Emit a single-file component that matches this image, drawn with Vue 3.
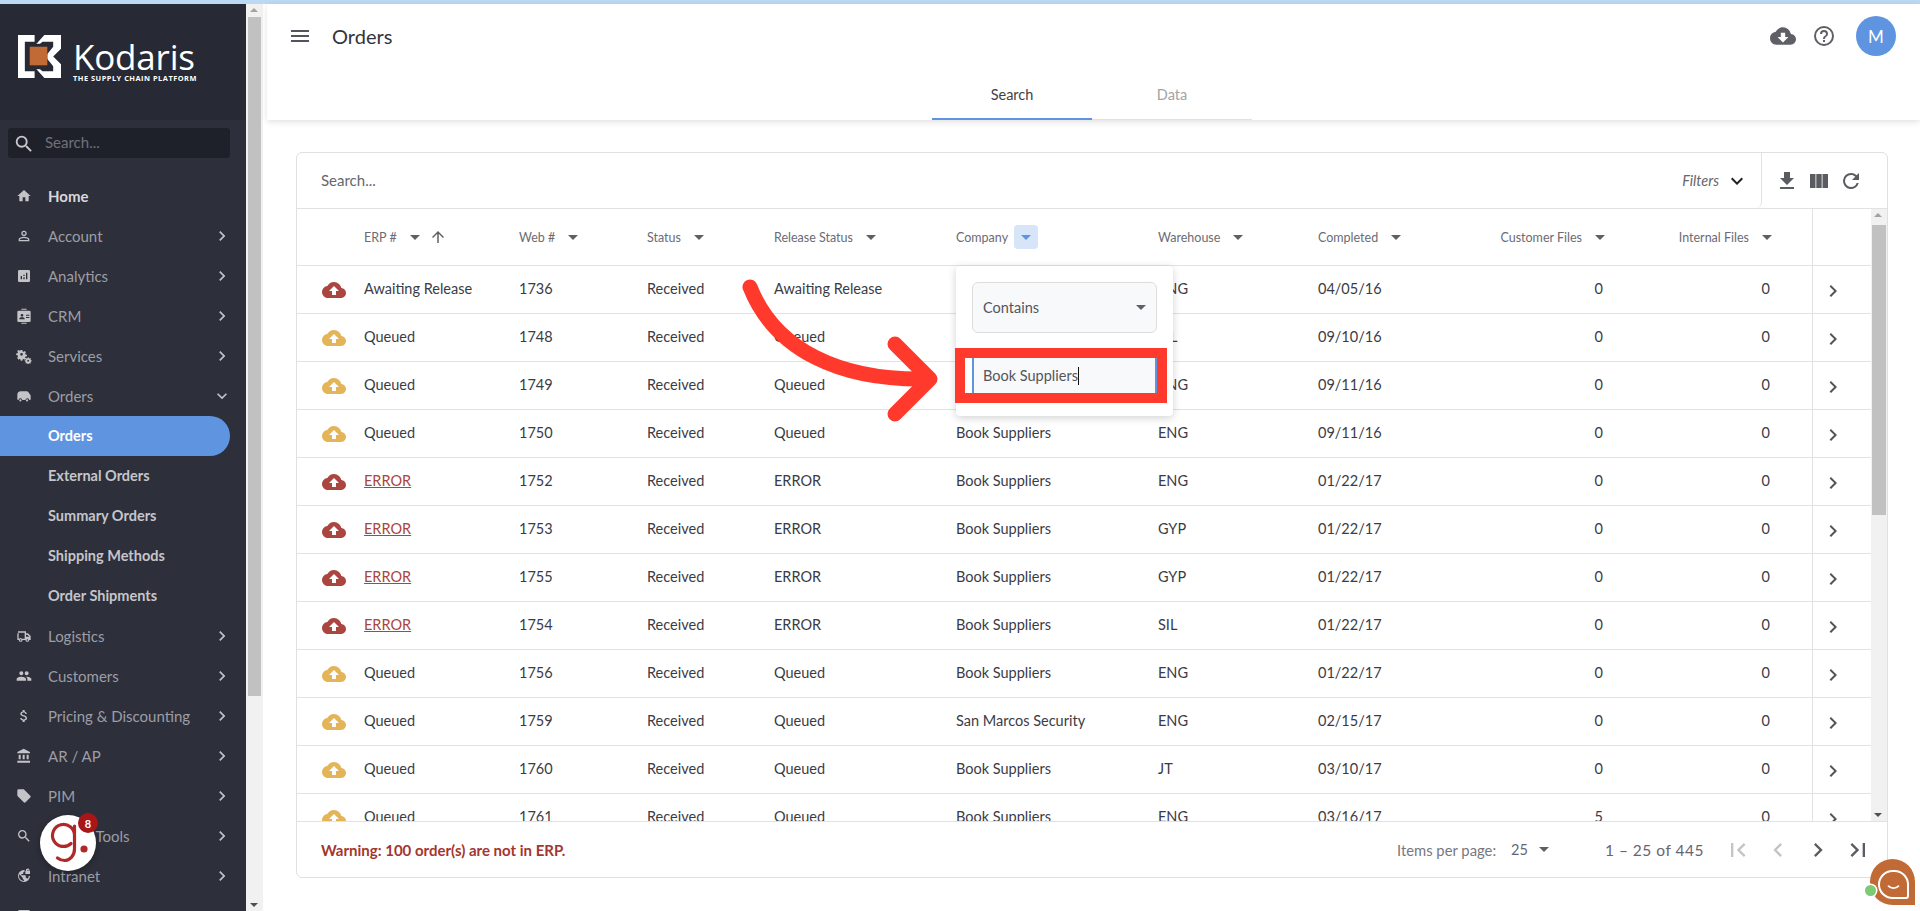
<script setup>
const nav = [
  { l: 'Home', i: 'home', bright: true, noArrow: true },
  { l: 'Account', i: 'acct' },
  { l: 'Analytics', i: 'ana' },
  { l: 'CRM', i: 'crm' },
  { l: 'Services', i: 'svc' },
  { l: 'Orders', i: 'truck', open: true },
  { l: 'Orders', sub: true, active: true },
  { l: 'External Orders', sub: true },
  { l: 'Summary Orders', sub: true },
  { l: 'Shipping Methods', sub: true },
  { l: 'Order Shipments', sub: true },
  { l: 'Logistics', i: 'ship' },
  { l: 'Customers', i: 'ppl' },
  { l: 'Pricing & Discounting', i: 'usd' },
  { l: 'AR / AP', i: 'bank' },
  { l: 'PIM', i: 'tag' },
  { l: 'Search Tools', i: 'mag' },
  { l: 'Intranet', i: 'globe' },
  { l: 'CMS', i: 'ana' }
]
const icons = {
  home: 'M10 20v-6h4v6h5v-8h3L12 3 2 12h3v8z',
  acct: 'M12 5.9a2.1 2.1 0 1 1 0 4.2 2.1 2.1 0 0 1 0-4.2m0 9c2.97 0 6.1 1.46 6.1 2.1v1.1H5.9V17c0-.64 3.13-2.1 6.1-2.1M12 4a4 4 0 1 0 0 8 4 4 0 0 0 0-8zm0 9c-2.67 0-8 1.34-8 4v3h16v-3c0-2.66-5.33-4-8-4z',
  ana: 'M19 3H5a2 2 0 0 0-2 2v14a2 2 0 0 0 2 2h14a2 2 0 0 0 2-2V5a2 2 0 0 0-2-2zM9 17H7v-5h2v5zm4 0h-2v-3h2v3zm0-5h-2v-2h2v2zm4 5h-2V7h2v10z',
  crm: 'M2 6a2 2 0 0 1 2-2h16a2 2 0 0 1 2 2v13a2 2 0 0 1-2 2H4a2 2 0 0 1-2-2zM9 9a2 2 0 1 0 0 4 2 2 0 0 0 0-4zm-4 8h8v-1c0-1.300-2.700-2-4-2s-4 .7-4 2zm10-7v1.500h5V10zm0 3.500V15h5v-1.500zM8 1h8v1.500H8zM8 22h8v1.500H8z',
  svc: 'M9.5 3l.4 2.1 1.6.7 1.8-1.2 1.6 1.6-1.2 1.8.7 1.6 2.1.4v2.3l-2.1.4-.7 1.6 1.2 1.8-1.6 1.6-1.8-1.2-1.6.7-.4 2.1H7.2l-.4-2.1-1.6-.7-1.8 1.2L1.8 14.4 3 12.6l-.7-1.6L.2 10.6V8.3l2.1-.4.7-1.6-1.2-1.8 1.6-1.6 1.8 1.2 1.6-.7L7.2 3zM8.3 7.5a2 2 0 1 0 0 4 2 2 0 0 0 0-4zM19 14l.3 1.2 1.1.5 1.1-.7 1 1-.7 1.1.5 1.1 1.2.3v1.400l-1.2.3-.5 1.100.7 1.100-1 1-1.100-.7-1.100.5-.3 1.200h-1.400l-.3-1.200-1.100-.5-1.100.7-1-1 .7-1.100-.5-1.100-1.200-.3v-1.400l1.200-.3.5-1.100-.7-1.100 1-1 1.100.7 1.100-.5.3-1.200zm-.7 3.600a1.400 1.400 0 1 0 0 2.800 1.400 1.400 0 0 0 0-2.800z',
  truck: 'M7 5h8c2 0 3.2.6 4.2 2l2.4 3.4c.3.5.4 1 .4 1.6v5a1 1 0 0 1-1 1h-1.2a2.8 2.8 0 0 0-5.6 0H9.4a2.8 2.8 0 0 0-5.6 0H3a1 1 0 0 1-1-1v-7c0-3 2-5 5-5zM6.6 17a1.6 1.6 0 1 1 0 3.2 1.6 1.6 0 0 1 0-3.2zm10 0a1.6 1.6 0 1 1 0 3.2 1.6 1.6 0 0 1 0-3.2z',
  ship: 'M3 5h12v3h3l4 4v6h-2.2a2.8 2.8 0 0 1-5.6 0H9.8a2.8 2.8 0 0 1-5.6 0H2V8h2v8h1a3 3 0 0 1 4 0h4V7H3zm12 5v3h5l-3-3zM7 16.8a1.2 1.2 0 1 0 0 2.4 1.2 1.2 0 0 0 0-2.4zm10 0a1.2 1.2 0 1 0 0 2.4 1.2 1.2 0 0 0 0-2.4z',
  ppl: 'M16 11a3 3 0 1 0 0-6 3 3 0 0 0 0 6zm-8 0a3 3 0 1 0 0-6 3 3 0 0 0 0 6zm0 2c-2.33 0-7 1.17-7 3.5V19h14v-2.5C15 14.17 10.33 13 8 13zm8 0c-.29 0-.62.02-.97.05 1.16.84 1.97 1.97 1.97 3.45V19h6v-2.5c0-2.33-4.67-3.5-7-3.5z',
  usd: 'M11.8 10.9c-2.27-.59-3-1.2-3-2.15 0-1.09 1.01-1.85 2.7-1.85 1.78 0 2.44.85 2.5 2.1h2.21c-.07-1.72-1.12-3.3-3.21-3.81V3h-3v2.16c-1.94.42-3.5 1.68-3.5 3.61 0 2.31 1.91 3.46 4.7 4.13 2.5.6 3 1.48 3 2.41 0 .69-.49 1.79-2.7 1.79-2.06 0-2.87-.92-2.98-2.1h-2.2c.12 2.19 1.76 3.42 3.68 3.83V21h3v-2.15c1.95-.37 3.5-1.5 3.5-3.55 0-2.84-2.43-3.81-4.7-4.4z',
  bank: 'M4 10v7h3v-7H4zm6 0v7h3v-7h-3zM2 22h19v-3H2v3zm14-12v7h3v-7h-3zM11.500 1L2 6v2h19V6l-9.500-5z',
  tag: 'M21.41 11.58l-9-9C12.05 2.22 11.55 2 11 2H4a2 2 0 0 0-2 2v7c0 .55.22 1.05.59 1.42l9 9c.36.36.86.58 1.41.58.55 0 1.05-.22 1.41-.59l7-7c.37-.36.59-.86.59-1.41 0-.55-.23-1.06-.59-1.42z',
  mag: 'M15.5 14h-.79l-.28-.27A6.47 6.47 0 0 0 16 9.5 6.5 6.5 0 1 0 9.500 16c1.61 0 3.09-.59 4.23-1.57l.27.28v.79l5 4.99L20.490 19l-4.990-5zm-6 0C7.010 14 5 11.990 5 9.500S7.010 5 9.500 5 14 7.010 14 9.500 11.990 14 9.500 14z',
  globe: 'M12 3a9 9 0 1 0 9 9h-2c0 1.500-.4 2.900-1.100 4.100-.5-.7-1.300-1.100-2.200-1.100h-1v-3a1 1 0 0 0-1-1H8v-2h2a1 1 0 0 0 1-1V6h1.500l.500-2.900A9 9 0 0 0 12 3zM5 9.500l5 5v1a2 2 0 0 0 2 2v2c-4-.1-7.500-3.500-7.500-7.500 0-.9.200-1.700.500-2.500zM17 1a2 2 0 0 0-2 2v1h-1v5h7V4h-1V3a2 2 0 0 0-3-2zm0 2h2v1h-2z'
}
const cols = [
  { l: 'ERP #' }, { l: 'Web #' }, { l: 'Status' }, { l: 'Release Status' }, { l: 'Company', active: true },
  { l: 'Warehouse' }, { l: 'Completed' }, { l: 'Customer Files', right: true }, { l: 'Internal Files', right: true }
]
const B = 'Book Suppliers'
const rows = [
  ['r', 'Awaiting Release', 1736, 'Awaiting Release', B, 'ENG', '04/05/16', 0],
  ['y', 'Queued', 1748, 'Queued', B, 'SIL', '09/10/16', 0],
  ['y', 'Queued', 1749, 'Queued', B, 'ENG', '09/11/16', 0],
  ['y', 'Queued', 1750, 'Queued', B, 'ENG', '09/11/16', 0],
  ['r', 'ERROR', 1752, 'ERROR', B, 'ENG', '01/22/17', 0],
  ['r', 'ERROR', 1753, 'ERROR', B, 'GYP', '01/22/17', 0],
  ['r', 'ERROR', 1755, 'ERROR', B, 'GYP', '01/22/17', 0],
  ['r', 'ERROR', 1754, 'ERROR', B, 'SIL', '01/22/17', 0],
  ['y', 'Queued', 1756, 'Queued', B, 'ENG', '01/22/17', 0],
  ['y', 'Queued', 1759, 'Queued', 'San Marcos Security', 'ENG', '02/15/17', 0],
  ['y', 'Queued', 1760, 'Queued', B, 'JT', '03/10/17', 0],
  ['y', 'Queued', 1761, 'Queued', B, 'ENG', '03/16/17', 5]
]
const cloudUp = 'M19.35 10.04A7.49 7.49 0 0 0 12 4C9.11 4 6.6 5.64 5.35 8.04A5.994 5.994 0 0 0 0 14c0 3.31 2.69 6 6 6h13c2.760 0 5-2.240 5-5 0-2.640-2.050-4.780-4.650-4.960zM14 13v4h-4v-4H7l5-5 5 5h-3z'
const cloudDown = 'M19.35 10.04A7.49 7.49 0 0 0 12 4C9.11 4 6.6 5.64 5.35 8.04A5.994 5.994 0 0 0 0 14c0 3.31 2.69 6 6 6h13c2.760 0 5-2.240 5-5 0-2.640-2.050-4.780-4.650-4.960zM17 13l-5 5-5-5h3V9h4v4h3z'
</script>

<template>
  <div class="page">
    <div class="topline"></div>
    <div class="shell">
      <aside class="side">
        <div class="brand">
          <svg class="logo-mark" viewBox="0 0 44 44">
            <path fill="#fff" d="M0 0h17v7H7v30h10v7H0zM27 0h17v14l-8 8 8 8v14H27l-9-10V31l7 6h11v-5l-8-10 8-10V7H25l-7 6V10z"/>
            <rect x="9" y="9" width="21" height="26" fill="#272a35"/>
            <rect x="12" y="12" width="18" height="19" fill="#c26a36"/>
          </svg>
          <div class="brand-text">
            <div class="brand-name">Kodaris</div>
            <div class="brand-sub">THE SUPPLY CHAIN PLATFORM</div>
          </div>
        </div>
        <div class="side-search">
          <svg viewBox="0 0 24 24" class="ss-icon"><path :d="icons.mag" /></svg>
          <span>Search...</span>
        </div>
        <nav class="nav">
          <div v-for="(n, k) in nav" :key="k" class="nav-item" :class="{ sub: n.sub, active: n.active, bright: n.bright }">
            <svg v-if="n.i" class="nav-icon" viewBox="0 0 24 24"><path :d="icons[n.i]" /></svg>
            <span class="nav-label">{{ n.l }}</span>
            <svg v-if="!n.sub && !n.noArrow" class="nav-arrow" viewBox="0 0 24 24">
              <path :d="n.open ? 'M16.59 8.59 12 13.17 7.41 8.59 6 10l6 6 6-6z' : 'M10 6 8.59 7.41 13.17 12l-4.58 4.59L10 18l6-6z'" />
            </svg>
          </div>
        </nav>
      </aside>
      <div class="side-scroll">
        <div class="sb-btn"><i class="tri up"></i></div>
        <div class="sb-track"><div class="sb-thumb side-thumb"></div></div>
        <div class="sb-btn"><i class="tri down"></i></div>
      </div>

      <main class="main">
        <header class="header">
          <div class="hbar">
            <svg class="menu" viewBox="0 0 24 24"><path d="M3 18h18v-2H3v2zm0-5h18v-2H3v2zm0-7v2h18V6H3z"/></svg>
            <h1>Orders</h1>
            <div class="hright">
              <svg class="h-cloud" viewBox="0 0 24 24"><path :d="cloudDown" /></svg>
              <svg class="h-help" viewBox="0 0 24 24"><path d="M11 18h2v-2h-2v2zm1-16a10 10 0 1 0 0 20 10 10 0 0 0 0-20zm0 18a8 8 0 1 1 0-16 8 8 0 0 1 0 16zm0-14a4 4 0 0 0-4 4h2a2 2 0 1 1 4 0c0 2-3 1.750-3 5h2c0-2.250 3-2.500 3-5a4 4 0 0 0-4-4z"/></svg>
              <div class="avatar">M</div>
            </div>
          </div>
          <div class="tabs">
            <div class="tab on">Search</div>
            <div class="tab">Data</div>
          </div>
        </header>

        <section class="card">
          <div class="toolbar">
            <div class="tb-left">
              <span class="tb-search">Search...</span>
              <span class="tb-filters">Filters</span>
              <svg class="tb-chev" viewBox="0 0 24 24"><path d="M16.59 8.59 12 13.17 7.41 8.59 6 10l6 6 6-6z"/></svg>
            </div>
            <div class="tb-right">
              <svg viewBox="0 0 24 24"><path d="M19 9h-4V3H9v6H5l7 7 7-7zM5 18v2h14v-2H5z"/></svg>
              <svg viewBox="0 0 24 24"><path d="M3 5h5.500v14H3zM9.300 5h5.400v14H9.300zM15.500 5H21v14h-5.500z"/></svg>
              <svg viewBox="0 0 24 24"><path d="M17.650 6.350A7.958 7.958 0 0 0 12 4a8 8 0 1 0 7.730 10h-2.080A5.990 5.990 0 0 1 12 18a6 6 0 1 1 0-12c1.660 0 3.140.69 4.220 1.780L13 11h7V4l-2.350 2.350z"/></svg>
            </div>
          </div>

          <div class="tablewrap">
            <div class="table">
              <div class="thead grid">
                <div class="c-ic"></div>
                <div v-for="(c, i) in cols" :key="i" class="th" :class="{ right: c.right }">
                  <span>{{ c.l }}</span>
                  <span class="th-btn" :class="{ on: c.active }"><i class="caret"></i></span>
                  <svg v-if="i === 0" class="sort" viewBox="0 0 24 24"><path d="M4 12l1.410 1.410L11 7.830V20h2V7.830l5.580 5.590L20 12l-8-8-8 8z"/></svg>
                </div>
                <div class="c-end"></div>
              </div>
              <div class="tbody">
                <div v-for="r in rows" :key="r[2]" class="grid tr">
                  <div class="c-ic">
                    <svg class="cloud" :class="r[0]" viewBox="0 0 24 24"><path :d="cloudUp" /></svg>
                  </div>
                  <div class="td" :class="{ err: r[1] === 'ERROR' }">{{ r[1] }}</div>
                  <div class="td">{{ r[2] }}</div>
                  <div class="td">Received</div>
                  <div class="td">{{ r[3] }}</div>
                  <div class="td">{{ r[4] }}</div>
                  <div class="td">{{ r[5] }}</div>
                  <div class="td">{{ r[6] }}</div>
                  <div class="td right">{{ r[7] }}</div>
                  <div class="td right">0</div>
                  <div class="c-end">
                    <svg viewBox="0 0 24 24"><path d="M10 6 8.590 7.410 13.170 12l-4.580 4.590L10 18l6-6z"/></svg>
                  </div>
                </div>
              </div>
            </div>
            <div class="tscroll">
              <div class="sb-btn"><i class="tri up"></i></div>
              <div class="sb-track"><div class="sb-thumb t-thumb"></div></div>
              <div class="sb-btn"><i class="tri down"></i></div>
            </div>
          </div>

          <footer class="foot">
            <span class="warn">Warning: 100 order(s) are not in ERP.</span>
            <span class="ipp">Items per page:</span>
            <span class="ipp-val">25</span>
            <i class="caret ipp-caret"></i>
            <span class="range">1 – 25 of 445</span>
            <div class="pager">
              <svg class="dim" viewBox="0 0 24 24"><path d="M18.410 16.590 13.820 12l4.590-4.590L17 6l-6 6 6 6zM6 6h2v12H6z"/></svg>
              <svg class="dim" viewBox="0 0 24 24"><path d="M15.410 7.410 14 6l-6 6 6 6 1.410-1.410L10.830 12z"/></svg>
              <svg viewBox="0 0 24 24"><path d="M10 6 8.590 7.410 13.170 12l-4.580 4.590L10 18l6-6z"/></svg>
              <svg viewBox="0 0 24 24"><path d="M5.590 7.410 10.180 12l-4.590 4.590L7 18l6-6-6-6zM16 6h2v12h-2z"/></svg>
            </div>
          </footer>
        </section>
      </main>
    </div>

    <div class="popup">
      <div class="pop-select"><span>Contains</span><i class="caret"></i></div>
      <div class="pop-input"><span>Book Suppliers</span><b class="cursor"></b></div>
    </div>
    <div class="redbox"></div>
    <svg class="arrow" width="1920" height="911" viewBox="0 0 1920 911">
      <path d="M750 287C775 350 840 381 928 379" fill="none" stroke="#ff3a2d" stroke-width="15" stroke-linecap="round"/>
      <path d="M895 344 L930 379 L895 414" fill="none" stroke="#ff3a2d" stroke-width="15" stroke-linecap="round" stroke-linejoin="round"/>
    </svg>

    <div class="gbadge">
      <svg viewBox="0 0 56 56" class="g-logo">
        <path d="M34.500 20.500a11 11 0 1 0-3.500 8M34.500 11v23c0 7-5 11.500-10 11.500-3 0-5-1-7-2.500" fill="none" stroke="#b0282a" stroke-width="3.200" stroke-linecap="round"/>
        <circle cx="44" cy="34" r="3.600" fill="#b0282a"/>
      </svg>
      <span class="gcount">8</span>
    </div>

    <div class="chat">
      <div class="chat-in"><svg viewBox="0 0 30 30"><path d="M9 17c3 3 9 3 12 0" fill="none" stroke="#fff" stroke-width="2" stroke-linecap="round"/></svg></div>
      <span class="chat-dot"></span>
    </div>
  </div>
</template>

<style>
html, body { margin: 0; padding: 0; background: #fff; overflow: hidden; }
</style>

<style scoped>
* { box-sizing: border-box; }
.page { position: relative; width: 1920px; height: 911px; overflow: hidden; font-family: "Lato", "Open Sans", sans-serif; color: #3a3a44; font-size: 14.5px; }
.topline { height: 4px; background: #bcd8f2; }
.shell { display: flex; height: 907px; }

.side { width: 246px; flex: none; background: #2d2f3b; overflow: hidden; display: flex; flex-direction: column; }
.brand { height: 116px; flex: none; background: #272a35; display: flex; align-items: flex-start; padding: 31px 0 0 18px; }
.logo-mark { width: 43px; height: 43px; flex: none; }
.brand-text { margin-left: 12px; }
.brand-name { color: #fff; font-family: "Open Sans", sans-serif; font-size: 35px; line-height: 37px; letter-spacing: -.2px; margin-top: 3px; }
.brand-sub { color: #fff; font-family: "Open Sans", sans-serif; font-size: 7.400px; font-weight: 700; line-height: 8px; letter-spacing: .5px; margin-top: -1px; white-space: nowrap; }
.side-search { margin: 8px 16px 0 8px; height: 30px; flex: none; background: #1f212a; border-radius: 3px; display: flex; align-items: center; color: #6f717a; font-size: 15px; padding: 0 0 2px 5px; }
.ss-icon { width: 22px; height: 22px; fill: #c8c8cc; margin: 3px 10px 0 0; }
.nav { margin-top: 18px; flex: none; }
.nav-item { height: 40px; display: flex; align-items: center; position: relative; padding-left: 48px; color: #9d9ea4; font-size: 15px; width: 230px; }
.nav-item.sub { color: #c5c5ca; font-weight: 700; font-size: 14.500px; }
.nav-item.bright { color: #d8d8dc; font-weight: 700; }
.nav-item.active { background: #5e94e0; color: #fff; border-radius: 0 20px 20px 0; }
.nav-icon { position: absolute; left: 16px; width: 16px; height: 16px; fill: #c3c4c8; }
.nav-arrow { position: absolute; left: 212px; width: 20px; height: 20px; fill: #c3c4c8; }
.nav-label { white-space: nowrap; padding-bottom: 1px; }

.side-scroll { width: 17px; flex: none; background: #f1f1f1; display: flex; flex-direction: column; }
.sb-btn { height: 13px; flex: none; position: relative; }
.sb-track { flex: 1; padding: 0 2px; }
.sb-thumb { background: #c1c1c1; }
.side-thumb { height: 679px; }
.t-thumb { height: 290px; }
.tri { position: absolute; left: 4px; width: 0; height: 0; border-left: 4px solid transparent; border-right: 4px solid transparent; }
.tri.up { top: 4px; border-bottom: 4px solid #a3a3a3; }
.tri.down { bottom: 4px; border-top: 4px solid #505050; }

.main { flex: 1; min-width: 0; display: flex; flex-direction: column; }
.header { height: 116px; flex: none; background: #fff; box-shadow: 0 2px 6px rgba(0,0,0,.12); display: flex; flex-direction: column; margin-left: 4px; }
.hbar { height: 64px; flex: none; display: flex; align-items: center; }
.menu { width: 24px; height: 24px; fill: #54555c; margin-left: 21px; }
h1 { margin: 0 0 0 20px; font-size: 20px; font-weight: 400; color: #34343c; }
.hright { margin-left: auto; display: flex; align-items: center; padding-right: 24px; }
.h-cloud { width: 26px; height: 26px; fill: #5f6066; }
.h-help { width: 24px; height: 24px; fill: #5f6066; margin-left: 16px; }
.avatar { width: 40px; height: 40px; margin-left: 20px; border-radius: 50%; background: #5e94e0; color: #fff; display: flex; align-items: center; justify-content: center; font-size: 17px; }
.tabs { display: flex; padding-left: 665px; height: 52px; }
.tab { width: 160px; display: flex; align-items: center; justify-content: center; color: #a2a3a8; font-size: 14.500px; padding-top: 2px; border-bottom: 1px solid #e2e2e2; }
.tab.on { color: #3f3f48; border-bottom: 2px solid #5e94e0; }

.card { margin: 32px 32px 0 33px; height: 726px; flex: none; border: 1px solid #e0e0e0; border-radius: 6px; display: flex; flex-direction: column; overflow: hidden; }
.toolbar { height: 56px; flex: none; display: flex; border-bottom: 1px solid #e2e2e2; }
.tb-left { flex: 1; display: flex; align-items: center; padding: 0 16px 0 24px; border-right: 1px solid #e2e2e2; border-radius: 0 0 6px 0; }
.tb-search { color: #66666e; font-size: 15px; padding-bottom: 2px; }
.tb-filters { margin-left: auto; color: #66666e; font-style: italic; font-size: 14.500px; }
.tb-chev { width: 24px; height: 24px; fill: #222; margin-left: 6px; margin-right: -4px; }
.tb-right { width: 125px; flex: none; display: flex; align-items: center; padding-left: 13px; gap: 8px; }
.tb-right svg { width: 24px; height: 24px; fill: #5b5c62; }

.tablewrap { flex: 1; min-height: 0; display: flex; }
.table { flex: 1; min-width: 0; display: flex; flex-direction: column; overflow: hidden; }
.grid { display: grid; grid-template-columns: 67px 155px 128px 127px 182px 202px 160px 160px 167px 167px 59px; }
.thead { height: 57px; flex: none; border-bottom: 1px solid #e2e2e2; align-items: center; }
.th { display: flex; align-items: center; font-size: 12.500px; color: #6b6b75; white-space: nowrap; }
.th.right { justify-content: flex-end; padding-right: 33px; }
.th-btn { width: 24px; height: 24px; margin-left: 6px; display: flex; align-items: center; justify-content: center; border-radius: 4px; }
.th-btn.on { background: #d6e6f8; }
.th-btn.on .caret { border-top-color: #5e94e0; }
.caret { display: block; width: 0; height: 0; border-left: 5px solid transparent; border-right: 5px solid transparent; border-top: 5px solid #5f5f66; }
.sort { width: 18px; height: 18px; fill: #5f5f66; margin-left: 2px; }
.c-end { border-left: 1px solid #e2e2e2; display: flex; align-items: center; padding-left: 8px; height: 100%; }
.c-end svg { width: 24px; height: 24px; fill: #54555c; margin-top: 2px; }
.tbody { flex: 1; overflow: hidden; }
.tr { height: 48px; border-bottom: 1px solid #e2e2e2; align-items: center; }
.c-ic { display: flex; align-items: center; justify-content: flex-end; padding-right: 18px; }
.cloud { width: 24px; height: 24px; }
.cloud.r { fill: #ab4540; }
.cloud.y { fill: #e3b458; }
.td { font-size: 14.500px; color: #3b3b45; white-space: nowrap; padding-bottom: 2px; }
.td.right { text-align: right; padding-right: 42px; }
.td.err { color: #ab4540; text-decoration: underline; }
.tscroll { width: 16px; flex: none; background: #f1f1f1; display: flex; flex-direction: column; }
.tscroll .sb-btn { height: 16px; }
.tscroll .sb-track { padding: 0 1px; }
.tscroll .tri { left: 3px; }
.foot { height: 56px; flex: none; border-top: 1px solid #e2e2e2; display: flex; align-items: center; padding: 0 15px 0 24px; }
.warn { color: #a5352f; font-weight: 700; font-size: 15px; }
.ipp { margin-left: auto; color: #777780; font-size: 14.800px; }
.ipp-val { margin-left: 15px; color: #666670; font-size: 14.500px; }
.ipp-caret { margin-left: 11px; }
.range { margin-left: 56px; color: #666670; font-size: 15.500px; letter-spacing: .5px; }
.pager { display: flex; margin-left: 20px; gap: 12px; }
.pager svg { width: 28px; height: 28px; fill: #5b5c62; }
.pager svg.dim { fill: #c4c4c4; }

.popup { position: absolute; left: 956px; top: 266px; width: 217px; height: 150px; background: #fff; border-radius: 4px; box-shadow: 0 2px 8px rgba(0,0,0,.18); padding: 16px; }
.pop-select { height: 51px; background: #f8f9fb; border: 1px solid #ddd; border-radius: 6px; display: flex; align-items: center; padding: 0 10px; color: #54555c; font-size: 14.500px; }
.pop-select .caret { margin-left: auto; }
.pop-input { margin-top: 25px; height: 35px; background: #f8f9fb; border-left: 2px solid #5e94e0; border-right: 2px solid #5e94e0; display: flex; align-items: center; padding-left: 9px; color: #54555c; font-size: 14.500px; }
.cursor { width: 1px; height: 18px; background: #111; }
.redbox { position: absolute; left: 955px; top: 348px; width: 212px; height: 55px; border: 10px solid #ff3a2d; }
.arrow { position: absolute; left: 0; top: 0; pointer-events: none; }

.gbadge { position: absolute; left: 40px; top: 815px; width: 56px; height: 56px; border-radius: 50%; background: #fff; box-shadow: 0 2px 6px rgba(0,0,0,.3); }
.g-logo { width: 56px; height: 56px; display: block; }
.gcount { position: absolute; left: 38px; top: -2px; width: 20px; height: 20px; border-radius: 50%; background: #a81618; color: #fff; font-size: 11px; font-weight: 700; display: flex; align-items: center; justify-content: center; }

.chat { position: absolute; left: 1870px; top: 859px; width: 45px; height: 46px; background: #c26a36; border-radius: 23px 23px 0 23px; }
.chat-in { position: absolute; left: 8px; top: 11px; width: 31px; height: 29px; border: 2px solid #fff; border-radius: 15px 15px 3px 15px; }
.chat-in svg { width: 100%; height: 100%; display: block; }
.chat-dot { position: absolute; left: -5px; top: 26px; width: 11px; height: 11px; border-radius: 50%; background: #7ccb72; box-shadow: 0 0 0 1.500px #fff; }
</style>
